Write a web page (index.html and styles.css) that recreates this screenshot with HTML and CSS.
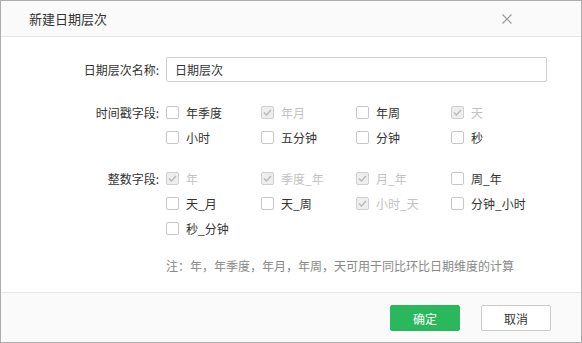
FILE: index.html
```html
<!DOCTYPE html>
<html lang="zh">
<head>
<meta charset="utf-8">
<link rel="stylesheet" href="styles.css">
</head>
<body>
<div class="dialog">
  <div class="header">
    <span class="title">新建日期层次</span>
    <svg class="close" width="10" height="10" viewBox="0 0 10 10"><path d="M0.5 0.5L9.5 9.5M9.5 0.5L0.5 9.5" stroke="#9a9a9a" stroke-width="1.2" fill="none"/></svg>
  </div>
  <div class="body">
    <div class="row name-row">
      <div class="label">日期层次名称:</div>
      <div class="input">日期层次</div>
    </div>
    <div class="row group ts">
      <div class="label lab-row">时间戳字段:</div>
      <div class="grid">
        <div class="opt"><span class="cb"></span>年季度</div>
        <div class="opt dis"><span class="cb on"><svg width="9" height="7" viewBox="0 0 9 7"><path d="M1 3.5L3.5 6L8 1" stroke="#bdbdbd" stroke-width="1.6" fill="none"/></svg></span>年月</div>
        <div class="opt"><span class="cb"></span>年周</div>
        <div class="opt dis"><span class="cb on"><svg width="9" height="7" viewBox="0 0 9 7"><path d="M1 3.5L3.5 6L8 1" stroke="#bdbdbd" stroke-width="1.6" fill="none"/></svg></span>天</div>
        <div class="opt"><span class="cb"></span>小时</div>
        <div class="opt"><span class="cb"></span>五分钟</div>
        <div class="opt"><span class="cb"></span>分钟</div>
        <div class="opt"><span class="cb"></span>秒</div>
      </div>
    </div>
    <div class="row group int">
      <div class="label lab-row">整数字段:</div>
      <div class="grid">
        <div class="opt dis"><span class="cb on"><svg width="9" height="7" viewBox="0 0 9 7"><path d="M1 3.5L3.5 6L8 1" stroke="#bdbdbd" stroke-width="1.6" fill="none"/></svg></span>年</div>
        <div class="opt dis"><span class="cb on"><svg width="9" height="7" viewBox="0 0 9 7"><path d="M1 3.5L3.5 6L8 1" stroke="#bdbdbd" stroke-width="1.6" fill="none"/></svg></span>季度_年</div>
        <div class="opt dis"><span class="cb on"><svg width="9" height="7" viewBox="0 0 9 7"><path d="M1 3.5L3.5 6L8 1" stroke="#bdbdbd" stroke-width="1.6" fill="none"/></svg></span>月_年</div>
        <div class="opt"><span class="cb"></span>周_年</div>
        <div class="opt"><span class="cb"></span>天_月</div>
        <div class="opt"><span class="cb"></span>天_周</div>
        <div class="opt dis"><span class="cb on"><svg width="9" height="7" viewBox="0 0 9 7"><path d="M1 3.5L3.5 6L8 1" stroke="#bdbdbd" stroke-width="1.6" fill="none"/></svg></span>小时_天</div>
        <div class="opt"><span class="cb"></span>分钟_小时</div>
        <div class="opt"><span class="cb"></span>秒_分钟</div>
      </div>
    </div>
    <div class="note">注：年，年季度，年月，年周，天可用于同比环比日期维度的计算</div>
  </div>
  <div class="footer">
    <button class="btn primary">确定</button>
    <button class="btn">取消</button>
  </div>
</div>
</body>
</html>
```
FILE: styles.css
```css
html, body {
  margin: 0;
  padding: 0;
  background: #fff;
}
body {
  font-family: "Noto Sans CJK SC", "Noto Sans", sans-serif;
  font-size: 12px;
  color: #333;
}
.dialog {
  width: 582px;
  height: 343px;
  box-sizing: border-box;
  border: 1px solid #adadad;
  display: flex;
  flex-direction: column;
  background: #fff;
}
.header {
  height: 36px;
  box-sizing: border-box;
  border-bottom: 1px solid #e6e6e6;
  background: #fafafa;
  display: flex;
  align-items: center;
  justify-content: space-between;
  padding: 0 69px 0 28px;
}
.header {
  padding-right: 69px;
}
.title {
  font-size: 13px;
  color: #333;
}
.close {
  margin-right: 0;
  position: relative;
  left: 0;
}
.body {
  flex: 1;
  padding-top: 20px;
  box-sizing: border-box;
}
.row {
  display: flex;
}
.label {
  width: 158px;
  margin-right: 7px;
  text-align: right;
  flex: none;
}
.name-row {
  align-items: center;
  height: 25px;
}
.input {
  width: 381px;
  height: 25px;
  box-sizing: border-box;
  border: 1px solid #cfcfcf;
  border-radius: 2px;
  padding-left: 8px;
  display: flex;
  align-items: center;
  color: #333;
}
.group.ts {
  margin-top: 18px;
}
.group.int {
  margin-top: 16px;
}
.lab-row {
  height: 25px;
  line-height: 25px;
}
.grid {
  display: grid;
  grid-template-columns: repeat(4, 95px);
  grid-auto-rows: 25px;
}
.opt {
  display: flex;
  align-items: center;
  color: #333;
}
.opt.dis {
  color: #c2c2c2;
}
.cb {
  width: 13px;
  height: 13px;
  box-sizing: border-box;
  border: 1px solid #c8c8c8;
  border-radius: 2px;
  margin-right: 7px;
  background: #fff;
  display: flex;
  align-items: center;
  justify-content: center;
  flex: none;
}
.cb.on {
  background: #eeeeee;
  border-color: #d0d0d0;
}
.note {
  margin: 16px 0 0 165px;
  color: #888;
  line-height: 18px;
}
.footer {
  height: 50px;
  box-sizing: border-box;
  border-top: 1px solid #e6e6e6;
  background: #fafafa;
  display: flex;
  justify-content: flex-end;
  align-items: flex-start;
  padding: 12px 30px 0 0;
  gap: 21px;
}
.btn {
  width: 70px;
  height: 26px;
  box-sizing: border-box;
  border: 1px solid #cccccc;
  border-radius: 2px;
  background: #fff;
  color: #333;
  font-family: "Noto Sans CJK SC", "Noto Sans", sans-serif;
  font-size: 12px;
  padding: 0;
}
.btn.primary {
  background: #2bb75b;
  border-color: #2bb75b;
  color: #fff;
}
```
